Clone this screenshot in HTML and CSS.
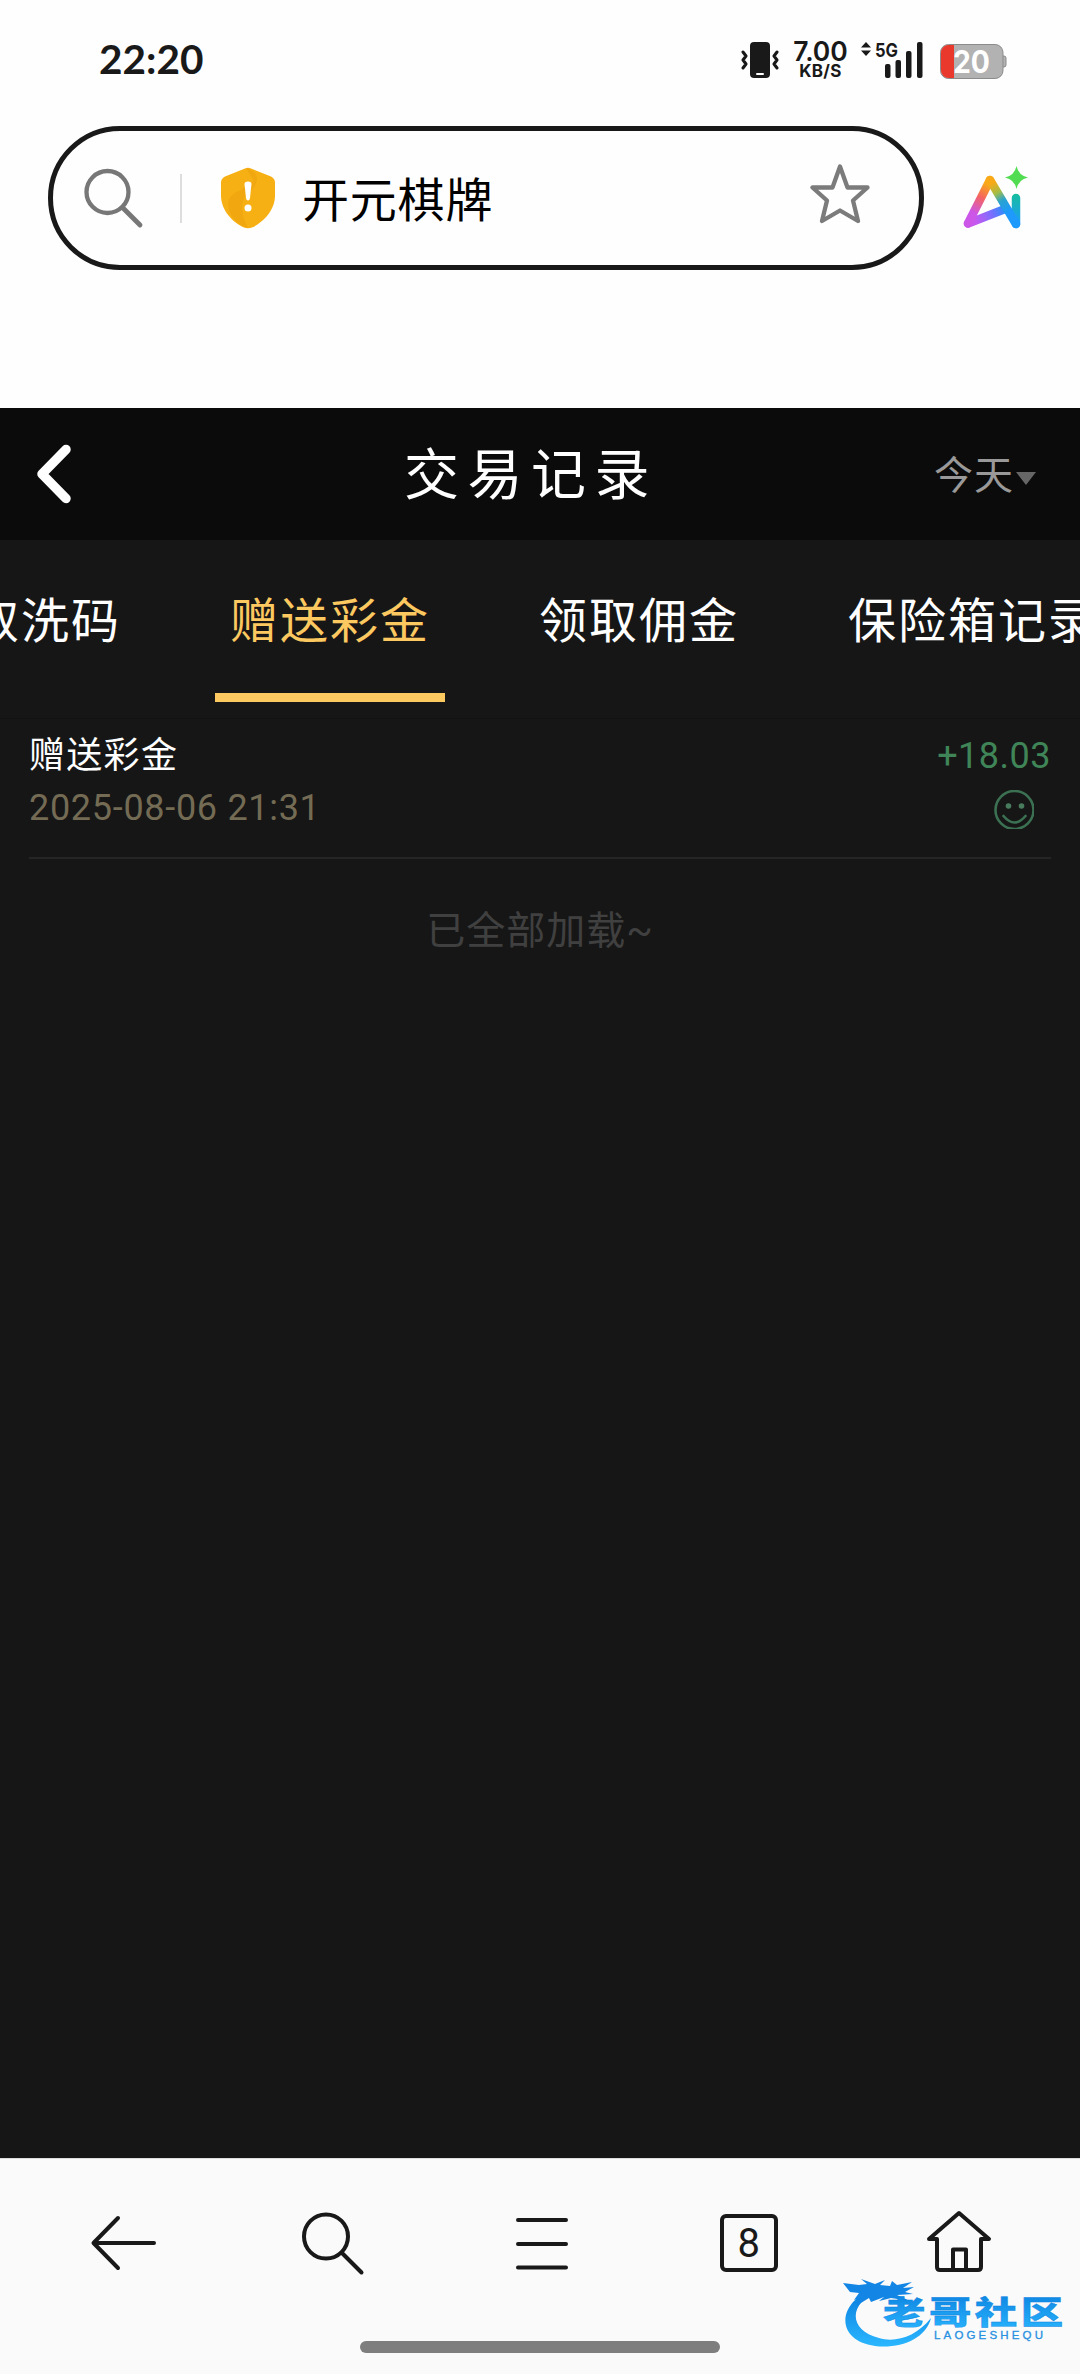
FILE: index.html
```html
<!DOCTYPE html>
<html lang="zh-CN">
<head>
<meta charset="utf-8">
<title>交易记录</title>
<link rel="stylesheet" href="styles.css">
</head>
<body>
<header class="browser">
  <div class="status">
    <span class="clock">22:20</span>
    <div class="indicators">
      <svg class="vibrate" width="38" height="38" viewBox="0 0 38 38">
        <rect x="9" y="1" width="20" height="36" rx="4" fill="#191919"/>
        <rect x="15" y="32" width="8" height="2" rx="1" fill="#fff"/>
        <path d="M2 11l3 4-3 4 3 4-3 4M36 11l-3 4 3 4-3 4 3 4" fill="none" stroke="#191919" stroke-width="3" stroke-linecap="round" stroke-linejoin="round"/>
      </svg>
      <div class="speed"><span class="rate">7.00</span><span class="unit">KB/S</span></div>
      <svg class="signal" width="62" height="38" viewBox="0 0 62 38">
        <path d="M0 6.500L5 1l5 5.500zM0 9.500L5 15l5-5.500z" fill="#191919"/>
        <text class="net" x="14" y="15.500" textLength="23" lengthAdjust="spacingAndGlyphs">5G</text>
        <g fill="#191919"><rect x="24" y="23" width="5.500" height="14" rx="2"/><rect x="34.500" y="19" width="5.500" height="18" rx="2"/><rect x="45" y="10" width="5.500" height="27" rx="2"/><rect x="56" y="1" width="5.500" height="36" rx="2"/></g>
      </svg>
      <svg class="battery" width="67" height="35" viewBox="0 0 67 35">
        <path d="M62 12h2q2 0 2 2v7q0 2-2 2h-2z" fill="#b2b2b2" stroke="#8b8b8b"/>
        <rect x=".5" y=".5" width="62.500" height="34" rx="8" fill="#b2b2b2" stroke="#8b8b8b"/>
        <path d="M14 1H8.500a7.500 7.500 0 0 0-7.500 7.500v18A7.500 7.500 0 0 0 8.500 34H14z" fill="#e9392c"/>
        <text class="level" x="13" y="28.500" textLength="37" lengthAdjust="spacingAndGlyphs">20</text>
      </svg>
    </div>
  </div>
  <div class="address-row">
    <div class="address">
      <svg class="find" width="62" height="62" viewBox="0 0 62 62" fill="none" stroke="#777" stroke-width="4.300" stroke-linecap="round"><circle cx="25.500" cy="25" r="21"/><path d="M41 41l17 17" stroke-width="4.800"/></svg>
      <i class="sep"></i>
      <svg class="shield" width="54" height="62" viewBox="0 0 54 62">
        <path d="M24 1.500q3-1.500 6 0l20 8q4 2 4 6v13c0 15-12 27-23 32q-4 1.500-8 0C12 55.500 0 43.500 0 28.500v-13q0-4 4-6z" fill="#f7b014"/>
        <path d="M12 51C3 38 7 27 20 23L33 14 25 1c13 3 15 15 3 24-10 8-8 23-1 36q-8-2-15-10z" fill="#eda20d" opacity=".6"/>
        <path d="M23.500 17q0-2.500 3.500-2.500t3.500 2.500l-1.500 14q-.5 2.500-2 2.500T25 31z" fill="#fff"/><circle cx="27" cy="41" r="3.500" fill="#fff"/>
      </svg>
      <span class="site">开元棋牌</span>
      <svg class="star" width="62" height="60" viewBox="0 0 62 60"><path d="M31 2.500L38.500 23.500H58.500L44 36.500 49 57 31 46.500 13 57 18 36.500 3.500 23.500H23.500Z" fill="none" stroke="#7b7b7b" stroke-width="4.300" stroke-linejoin="round"/></svg>
    </div>
    <svg class="ai" width="66" height="64" viewBox="0 0 66 64" fill="none" stroke-width="8.500" stroke-linecap="round" stroke-linejoin="round">
      <defs>
        <linearGradient id="ga" gradientUnits="userSpaceOnUse" x1="27" y1="14" x2="5" y2="58"><stop offset=".1" stop-color="#f9a916"/><stop offset=".4" stop-color="#f46463"/><stop offset=".75" stop-color="#cb56e8"/></linearGradient>
        <linearGradient id="gb" gradientUnits="userSpaceOnUse" x1="5" y1="58" x2="42" y2="43"><stop offset=".2" stop-color="#c758ef"/><stop offset=".65" stop-color="#796fff"/><stop offset="1" stop-color="#278ffa"/></linearGradient>
        <linearGradient id="gc" gradientUnits="userSpaceOnUse" x1="27" y1="14" x2="45" y2="46"><stop offset=".1" stop-color="#f9a916"/><stop offset=".4" stop-color="#a4bd46"/><stop offset=".65" stop-color="#29a3cf"/><stop offset="1" stop-color="#1e99fc"/></linearGradient>
        <linearGradient id="gd" gradientUnits="userSpaceOnUse" x1="53" y1="28" x2="53" y2="58"><stop stop-color="#16bd9f"/><stop offset="1" stop-color="#1d9cfb"/></linearGradient>
      </defs>
      <path d="M5 57.500L42 43" stroke="url(#gb)"/>
      <path d="M27 14L5 57.500" stroke="url(#ga)"/>
      <path d="M53 32V58" stroke="url(#gd)"/>
      <path d="M27 14L53 58" stroke="url(#gc)"/>
      <path d="M53.500 0Q55.500 9.500 65 11.500 55.500 13.500 53.500 23 51.500 13.500 42 11.500 51.500 9.500 53.500 0z" fill="#51dc51"/>
    </svg>
  </div>
</header>
<main class="page">
  <div class="titlebar">
    <svg class="back" width="36" height="60" viewBox="0 0 36 60"><path d="M30 5.500L6 30l24 24.500" fill="none" stroke="#fff" stroke-width="9.500" stroke-linecap="round" stroke-linejoin="round"/></svg>
    <h1>交易记录</h1>
    <div class="filter"><span>今天</span><i class="caret"></i></div>
  </div>
  <nav class="tabs">
    <a class="tab">领取洗码</a><a class="tab active">赠送彩金</a><a class="tab">领取佣金</a><a class="tab">保险箱记录</a>
  </nav>
  <section class="records">
    <article class="record">
      <div class="info"><span class="name">赠送彩金</span><time>2025-08-06 21:31</time></div>
      <div class="result"><span class="amount">+18.03</span>
        <svg class="smile" width="40" height="39" viewBox="0 0 40 39" fill="none" stroke="#3b7152" stroke-width="2.600"><circle cx="20.500" cy="20" r="19"/><path d="M9.500 26q11 13 22 0" stroke-width="2.600" stroke-linecap="round"/><g fill="#477b5c" stroke="none"><circle cx="14.500" cy="16" r="2.800"/><circle cx="27.500" cy="16" r="2.800"/></g></svg>
      </div>
    </article>
    <p class="end">已全部加载~</p>
  </section>
</main>
<footer class="toolbar">
  <div class="actions">
    <svg width="66" height="66" viewBox="0 0 66 66"><path d="M28 8L3.500 33l24.500 25M4 33h60"/></svg>
    <svg width="66" height="66" viewBox="0 0 66 66"><circle cx="27" cy="26.500" r="22"/><path d="M43 43l19.500 19.500"/></svg>
    <svg width="66" height="66" viewBox="0 0 66 66"><path d="M9 10h48M9 34h48M9 57.500h48"/></svg>
    <span class="count">8</span>
    <svg width="66" height="66" viewBox="0 0 66 66"><path d="M3 29L33 3 63 29H55V57q0 3-3 3H14q-3 0-3-3V29zM27 60V39.500h13V60"/></svg>
  </div>
  <i class="handle"></i>
  <svg class="watermark" width="224" height="72" viewBox="0 0 224 72">
    <defs><linearGradient id="wm" x1="0" y1="0" x2="0" y2="1"><stop stop-color="#087cdd"/><stop offset="1" stop-color="#2bb7ff"/></linearGradient></defs>
    <path d="M30 12C-4 24-8 62 33 68 58 71 84 61 89 40 74 59 53 65 37 60 5 52 7 24 37 13z" fill="url(#wm)"/>
    <path d="M1 5l16 2 8-1-6-5 14 5 10-4-5 5 10 1 2-5 5 4 15-3-9 6 11-1-9 5 8 2-16 1 13 6-19-3-12 3 5-4-13 5-2-4-13 8 5-8-7 2 5-7-9-1z" fill="#1385e5"/>
    <text class="wm-name" transform="translate(41 46) scale(1.060 .8)" textLength="170">老哥社区</text>
    <text class="wm-latin" x="92" y="61" textLength="109">LAOGESHEQU</text>
  </svg>
</footer>
</body>
</html>
```
FILE: styles.css
```css
* { box-sizing: border-box; }
body {
  margin: 0;
  width: 1080px;
  height: 2374px;
  display: flex;
  flex-direction: column;
  overflow: hidden;
  background: #161616;
  font-family: Roboto, "Noto Sans CJK SC", sans-serif;
}
svg { display: block; flex: none; }
.browser { height: 408px; background: #fefefe; }
.status {
  height: 126px;
  padding: 37px 73px 0 99px;
  display: flex;
  justify-content: space-between;
  align-items: flex-start;
  color: #191919;
}
.clock { font: bold 40.5px/43px Lato, sans-serif; }
.indicators { display: flex; padding-top: 4px; font-family: Inter, sans-serif; }
.vibrate { margin-right: 12px; }
.speed {
  width: 59px;
  margin-right: 11px;
  display: flex;
  flex-direction: column;
  align-items: center;
  font-weight: 600;
}
.rate { font-size: 26.5px; line-height: 21px; letter-spacing: 0; }
.unit { font-size: 17px; line-height: 18px; letter-spacing: .3px; font-weight: 700; }
.signal { margin-right: 17px; overflow: visible; }
.net { font: 700 19px Inter, sans-serif; fill: #191919; }
.battery { margin-top: 3px; }
.level { font: 700 31px Inter, sans-serif; fill: #fff; }
.address-row { display: flex; align-items: center; padding-left: 48px; gap: 39px; }
.address {
  width: 876px;
  height: 144px;
  border: 5px solid #191919;
  border-radius: 72px;
  display: flex;
  align-items: center;
  padding: 0 48px 0 29px;
}
.sep { width: 2px; height: 49px; margin: 0 39px 0 36px; background: #ddd; }
.site { margin-left: 27px; font-size: 47px; line-height: 60px; letter-spacing: .8px; flex: 1; color: #000; padding-top: 5px; }
.star { margin-top: -8px; }
.page { height: 1750px; background: #161616; }
.titlebar {
  height: 132px;
  background: #0b0b0b;
  display: grid;
  grid-template-columns: 290px 1fr 300px;
  align-items: center;
  padding: 0 44px 0 36px;
}
h1 { margin: 0; font-size: 55px; line-height: 80px; font-weight: 400; letter-spacing: 8.5px; color: #fff; text-align: center; padding-top: 1px; }
.filter { display: flex; justify-content: flex-end; align-items: center; font-size: 39px; letter-spacing: 1px; color: #999; padding-bottom: 5px; }
.caret { margin: 13px 0 0 2px; border: solid transparent; border-width: 13px 10.5px 0; border-top-color: #666; }
.tabs {
  height: 179px;
  border-bottom: 1px solid #121212;
  display: flex;
  gap: 79px;
  overflow: hidden;
}
.tab {
  flex: none;
  height: 162px;
  padding: 0 15px;
  line-height: 163px;
  font-size: 48px;
  letter-spacing: 2px;
  color: #fff;
  border-bottom: 9px solid transparent;
  white-space: nowrap;
}
.tab:first-child { margin-left: -94px; }
.active { color: #fcc860; border-bottom-color: #fcc860; }
.records { padding: 10px 29px; }
.record {
  height: 130px;
  border-bottom: 2px solid #252525;
  display: flex;
  justify-content: space-between;
  font-size: 36px;
  letter-spacing: 1.3px;
}
.info, .result { display: flex; flex-direction: column; }
.name, .amount { color: #fff; line-height: 54px; }
time { color: #746b54; line-height: 50px; letter-spacing: .7px; }
.result { align-items: flex-end; }
.amount { color: #408558; letter-spacing: .5px; }
.smile { margin: 7px 17px 0 0; }
.end { margin: 0; padding-top: 43px; text-align: center; color: #404040; font-size: 39px; line-height: 58px; letter-spacing: 1px; }
.toolbar {
  position: relative;
  height: 216px;
  background: #fafafa;
  border-top: 1px solid #ddd;
  display: flex;
  flex-direction: column;
  align-items: center;
}
.actions { width: 100%; padding: 51px 88px 0 90px; display: flex; justify-content: space-between; align-items: flex-start; }
.actions svg { fill: none; stroke: #191919; stroke-width: 4; stroke-linecap: round; stroke-linejoin: round; }
.actions svg:nth-child(-n+3) { margin-right: 1px; }
.count {
  width: 58px;
  height: 58px;
  margin: 4px 6px 0 2px;
  border: 4px solid #191919;
  border-radius: 6px;
  text-align: center;
  font: 40px/52px Roboto, sans-serif;
  color: #191919;
}
.handle { width: 360px; height: 12px; margin-top: 65px; border-radius: 6px; background: #7e7e7e; }
.watermark { position: absolute; left: 842px; top: 119px; }
.wm-name { font: 900 40px "Noto Sans CJK SC", sans-serif; fill: url(#wm); stroke: #0e83df; stroke-width: .5px; }
.wm-latin { font: 11.5px "Liberation Sans", sans-serif; fill: #2790e1; stroke: #2790e1; stroke-width: .3px; }
```
